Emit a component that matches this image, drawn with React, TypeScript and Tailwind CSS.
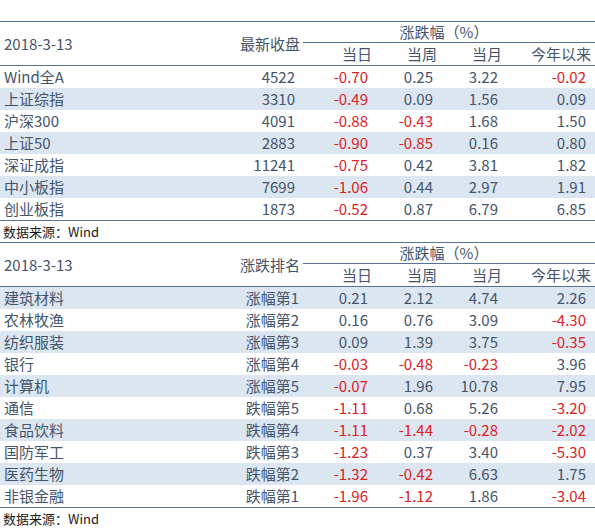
type Cell = string;

const cols = "grid grid-cols-[210px_93px_72px_65px_65px_90px]";

const t1: Cell[][] = [
  ["Wind全A", "4522", "-0.70", "0.25", "3.22", "-0.02"],
  ["上证综指", "3310", "-0.49", "0.09", "1.56", "0.09"],
  ["沪深300", "4091", "-0.88", "-0.43", "1.68", "1.50"],
  ["上证50", "2883", "-0.90", "-0.85", "0.16", "0.80"],
  ["深证成指", "11241", "-0.75", "0.42", "3.81", "1.82"],
  ["中小板指", "7699", "-1.06", "0.44", "2.97", "1.91"],
  ["创业板指", "1873", "-0.52", "0.87", "6.79", "6.85"],
];

const t2: Cell[][] = [
  ["建筑材料", "涨幅第1", "0.21", "2.12", "4.74", "2.26"],
  ["农林牧渔", "涨幅第2", "0.16", "0.76", "3.09", "-4.30"],
  ["纺织服装", "涨幅第3", "0.09", "1.39", "3.75", "-0.35"],
  ["银行", "涨幅第4", "-0.03", "-0.48", "-0.23", "3.96"],
  ["计算机", "涨幅第5", "-0.07", "1.96", "10.78", "7.95"],
  ["通信", "跌幅第5", "-1.11", "0.68", "5.26", "-3.20"],
  ["食品饮料", "跌幅第4", "-1.11", "-1.44", "-0.28", "-2.02"],
  ["国防军工", "跌幅第3", "-1.23", "0.37", "3.40", "-5.30"],
  ["医药生物", "跌幅第2", "-1.32", "-0.42", "6.63", "1.75"],
  ["非银金融", "跌幅第1", "-1.96", "-1.12", "1.86", "-3.04"],
];

function num(v: string) {
  return v.startsWith("-") ? "text-[#e0201c]" : "text-[#44546a]";
}

function Header({ label }: { label: string }) {
  return (
    <div className={`${cols} h-[45px] border-y border-[#5a7394] text-[#44546a]`}>
      <div className="row-span-2 flex items-center pl-[4px]">2018-3-13</div>
      <div className="row-span-2 flex items-center justify-end pr-[3px]">{label}</div>
      <div className="col-span-4 flex h-[21px] items-end justify-center border-b border-[#5a7394] pr-[10px] leading-[20px]">
        涨跌幅（%）
      </div>
      <div className="flex h-[22px] items-center justify-end pr-[3px]">当日</div>
      <div className="flex h-[22px] items-center justify-end pr-[3px]">当周</div>
      <div className="flex h-[22px] items-center justify-end pr-[3px]">当月</div>
      <div className="flex h-[22px] items-center justify-end pr-[4px]">今年以来</div>
    </div>
  );
}

function Table({ label, rows, shadeOdd, col2Num }: { label: string; rows: Cell[][]; shadeOdd: boolean; col2Num: boolean }) {
  return (
    <div>
      <Header label={label} />
      {rows.map((r, i) => (
        <div
          key={i}
          className={`${cols} h-[22px] items-center ${(i % 2 === 0) === shadeOdd ? "bg-[#dce6f1]" : ""}`}
        >
          <div className="pl-[4px] text-[#44546a]">{r[0]}</div>
          <div className={`text-right text-[#44546a] ${col2Num ? "pr-[8px]" : "pr-[4px]"}`}>{r[1]}</div>
          <div className={`pr-[7px] text-right ${num(r[2])}`}>{r[2]}</div>
          <div className={`pr-[7px] text-right ${num(r[3])}`}>{r[3]}</div>
          <div className={`pr-[7px] text-right ${num(r[4])}`}>{r[4]}</div>
          <div className={`pr-[9px] text-right ${num(r[5])}`}>{r[5]}</div>
        </div>
      ))}
      <div className="flex h-[22px] items-center border-t border-[#5a7394] pl-[3px] text-[13px] text-[#1a1a1a]">
        数据来源：Wind
      </div>
    </div>
  );
}

export default function App() {
  return (
    <div
      className="h-[529px] w-[595px] overflow-hidden bg-white pt-[21px] text-[15px] leading-[22px]"
      style={{ fontFamily: '"Noto Sans CJK SC", "Noto Sans", sans-serif' }}
    >
      <Table label="最新收盘" rows={t1} shadeOdd={false} col2Num={true} />
      <Table label="涨跌排名" rows={t2} shadeOdd={true} col2Num={false} />
    </div>
  );
}
